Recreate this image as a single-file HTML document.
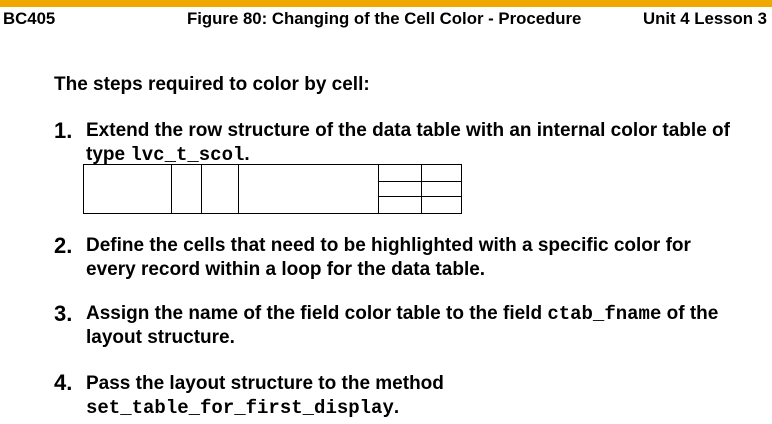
<!DOCTYPE html>
<html><head><style>
body{margin:0;width:772px;height:424px;background:#fff;position:relative;overflow:hidden;font-family:"Liberation Sans",Arial,sans-serif;color:#000}
.bar{position:absolute;left:0;top:0;width:772px;height:7px;background:#f0a800}
.h{position:absolute;top:9px;font-size:16.8px;font-weight:bold}
.t{position:absolute;font-size:19px;font-weight:bold;line-height:24px;white-space:nowrap}
.n{position:absolute;font-size:22px;font-weight:bold}
code{font-family:"Liberation Mono",monospace;font-size:19px;font-weight:bold}
.v{position:absolute;background:#000;width:1px}
.hz{position:absolute;background:#000;height:1px}
</style></head><body>
<div class="bar"></div>
<div class="h" style="left:3px">BC405</div>
<div class="h" style="left:187px">Figure 80: Changing of the Cell Color - Procedure</div>
<div class="h" style="right:5px">Unit 4 Lesson 3</div>
<div class="t" style="left:54px;top:73px">The steps required to color by cell:</div>
<div class="n" style="left:54px;top:118px">1.</div>
<div class="t" style="left:86px;top:119px">Extend the row structure of the data table with an internal color table of<br>type <code>lvc_t_scol</code>.</div>
<div style="position:absolute;left:83px;top:164px;width:377px;height:48px;border:1px solid #000"></div>
<div class="v" style="left:171px;top:164px;height:49px"></div>
<div class="v" style="left:201px;top:164px;height:49px"></div>
<div class="v" style="left:238px;top:164px;height:49px"></div>
<div class="v" style="left:378px;top:164px;height:49px"></div>
<div class="v" style="left:421px;top:164px;height:49px"></div>
<div class="hz" style="left:378px;top:181px;width:83px"></div>
<div class="hz" style="left:378px;top:196px;width:83px"></div>
<div class="n" style="left:54px;top:233px">2.</div>
<div class="t" style="left:86px;top:234px">Define the cells that need to be highlighted with a specific color for<br>every record within a loop for the data table.</div>
<div class="n" style="left:54px;top:301px">3.</div>
<div class="t" style="left:86px;top:302px">Assign the name of the field color table to the field <code>ctab_fname</code> of the<br>layout structure.</div>
<div class="n" style="left:54px;top:370px">4.</div>
<div class="t" style="left:86px;top:372px">Pass the layout structure to the method<br><code>set_table_for_first_display</code>.</div>
</body></html>
